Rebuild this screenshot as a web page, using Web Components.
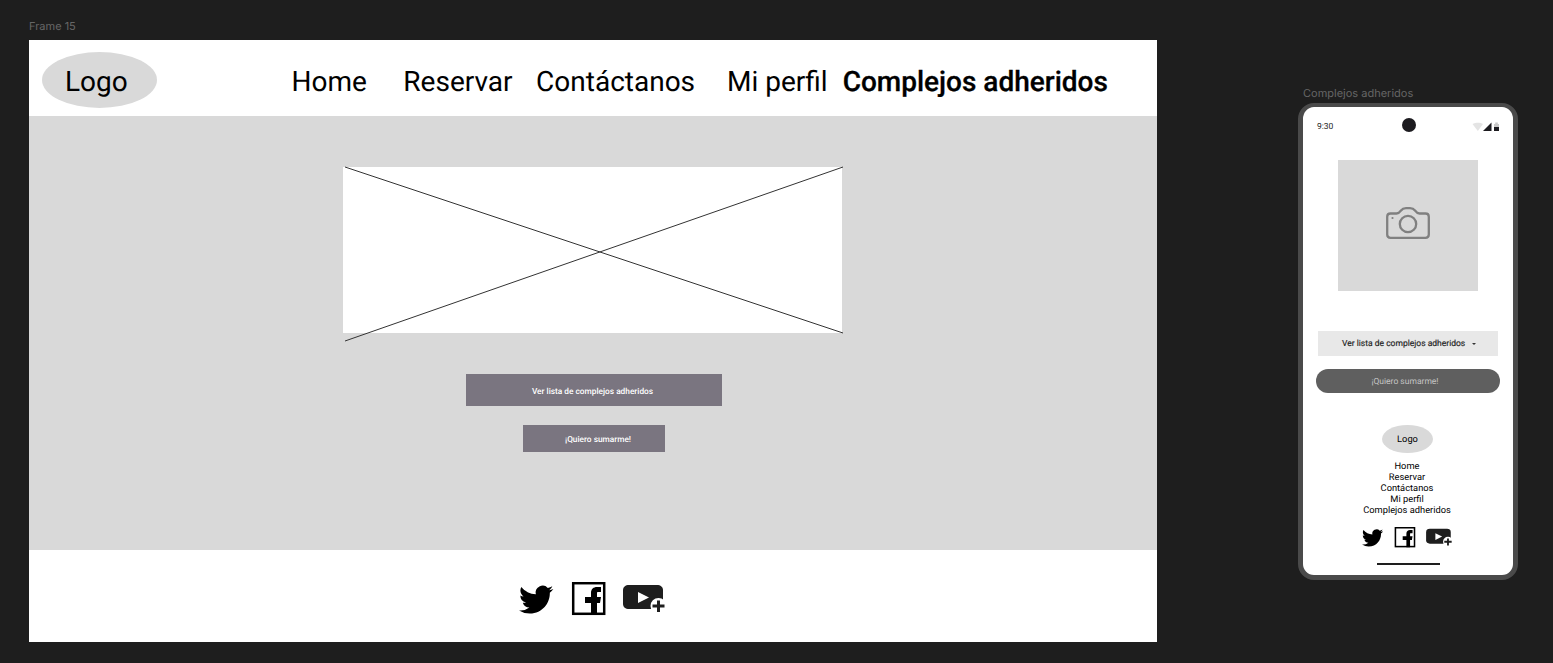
<!DOCTYPE html>
<html lang="es">
<head>
<meta charset="utf-8">
<title>Complejos adheridos</title>
<style>
  html, body { margin: 0; height: 100%; }
  body { background: #1e1e1e; overflow: hidden; font-family: Roboto, "Liberation Sans", sans-serif; text-rendering: geometricPrecision; }
</style>
</head>
<body>
<design-canvas>
  <canvas-frame label="Frame 15" style="left:29px;top:40px" >
    <desktop-page></desktop-page>
  </canvas-frame>
  <canvas-frame label="Complejos adheridos" style="left:1298px;top:103px" label-offset="5" label-top="-17">
    <phone-page></phone-page>
  </canvas-frame>
</design-canvas>

<script>
class DesignCanvas extends HTMLElement {
  constructor() {
    super();
    this.attachShadow({ mode: 'open' });
    this.shadowRoot.innerHTML = `
<style>
  :host { display: block; position: relative; width: 1553px; height: 663px; overflow: hidden; }
</style>
<slot></slot>
    `;
  }
}

class CanvasFrame extends HTMLElement {
  constructor() {
    super();
    this.attachShadow({ mode: 'open' });
  }

  connectedCallback() {
    const offset = this.getAttribute('label-offset') || 0;
    const top = this.getAttribute('label-top') || -21;
    this.shadowRoot.innerHTML = `
<style>
  :host { display: block; position: absolute; }
  .label {
    position: absolute;
    left: ${offset}px;
    top: ${top}px;
    font: 11px/14px Inter, "Liberation Sans", sans-serif;
    color: #666;
    white-space: nowrap;
  }
</style>
<div class="label">${this.getAttribute('label')}</div>
<slot></slot>
    `;
  }
}

class SocialIcons extends HTMLElement {
  constructor() {
    super();
    this.attachShadow({ mode: 'open' });
  }

  connectedCallback() {
    const width = this.getAttribute('width') || 146;
    this.shadowRoot.innerHTML = `
<style>
  :host { display: block; line-height: 0; }
</style>
<svg width="${width}" viewBox="0 0 146 34" fill="none">
  <path transform="translate(0 0.5) scale(1.43)" fill="#000" d="M23.953 4.57a10 10 0 01-2.825.775 4.958 4.958 0 002.163-2.723c-.951.555-2.005.959-3.127 1.184a4.92 4.92 0 00-8.384 4.482C7.69 8.095 4.067 6.13 1.64 3.162a4.822 4.822 0 00-.666 2.475c0 1.71.87 3.213 2.188 4.096a4.904 4.904 0 01-2.228-.616v.06a4.923 4.923 0 003.946 4.827 4.996 4.996 0 01-2.212.085 4.936 4.936 0 004.604 3.417 9.867 9.867 0 01-6.102 2.105c-.39 0-.779-.023-1.17-.067a13.995 13.995 0 007.557 2.209c9.053 0 13.998-7.496 13.998-13.985 0-.21 0-.42-.015-.63A9.935 9.935 0 0024 4.59z"/>
  <rect x="54.200" y="1.200" width="31" height="30.600" stroke="#000" stroke-width="2.500"/>
  <path fill="#000" d="M72 33V21h-6v-6h6v-4c0-4 2.500-6 6-6h4v5h-3c-1 0-1 .5-1 1.500V15h4l-1 6h-3v12z"/>
  <path fill="#1e1e1e" d="M110 3h28c3.500 0 6 2 6 5v14c0 3-2.500 5-6 5h-28c-3.500 0-6-2-6-5V8c0-3 2.500-5 6-5z"/>
  <path fill="#fff" d="M119 10l11 5.500-11 5.500z"/>
  <circle cx="139.500" cy="24" r="8" fill="#fff"/>
  <path fill="#1e1e1e" d="M138 18.500h3V22.500h4.500v3H141v4.500h-3v-4.500h-4.500v-3h4.500z"/>
</svg>
    `;
  }
}

class DesktopHeader extends HTMLElement {
  constructor() {
    super();
    this.attachShadow({ mode: 'open' });
    this.shadowRoot.innerHTML = `
<style>
  :host {
    display: flex;
    align-items: center;
    height: 76px;
    background: #fff;
    color: #000;
    font: 28px/34px Roboto, sans-serif;
    white-space: nowrap;
  }
  .logo {
    display: flex;
    align-items: center;
    box-sizing: border-box;
    width: 115px;
    height: 56px;
    margin: 4px 0 0 13px;
    padding: 4px 0 0 23px;
    border-radius: 50%;
    background: #d9d9d9;
  }
  a { color: inherit; text-decoration: none; padding-top: 8px; }
  a.home { margin-left: 134.500px; }
  a.reservar { margin-left: 36.500px; }
  a.contact { margin-left: 23.500px; }
  a.perfil { margin-left: 32px; }
  a.current { margin-left: 15px; font-weight: 500; -webkit-text-stroke: .3px #000; }
</style>
<div class="logo">Logo</div>
<a class="home">Home</a>
<a class="reservar">Reservar</a>
<a class="contact">Contáctanos</a>
<a class="perfil">Mi perfil</a>
<a class="current">Complejos adheridos</a>
    `;
  }
}

class DesktopPage extends HTMLElement {
  constructor() {
    super();
    this.attachShadow({ mode: 'open' });
    this.shadowRoot.innerHTML = `
<style>
  :host { display: block; width: 1128px; height: 602px; background: #fff; }
  main { height: 434px; box-sizing: border-box; padding: 51px 0 0 314px; background: #d9d9d9; }
  .image { position: relative; width: 499px; height: 166px; background: #fff; }
  .image svg { position: absolute; left: 0; top: 0; overflow: visible; }
  .btn {
    display: flex;
    align-items: center;
    justify-content: center;
    box-sizing: border-box;
    background: #7a7580;
    color: #fff;
    font: 500 8.300px/10px Roboto, sans-serif;
    padding-top: 3px;
  }
  .list { width: 256px; height: 32px; margin: 41px 0 0 123px; padding-right: 3px; }
  .join { width: 142px; height: 27px; margin: 19px 0 0 180px; padding-left: 8px; }
  footer { display: flex; justify-content: center; padding: 32px 2px 0 0; }
</style>
<desktop-header></desktop-header>
<main>
  <div class="image">
    <svg width="499" height="166">
      <path d="M2 0L500 166M2 174L500 0" stroke="#333" stroke-width="1" fill="none"/>
    </svg>
  </div>
  <div class="btn list">Ver lista de complejos adheridos</div>
  <div class="btn join">¡Quiero sumarme!</div>
</main>
<footer><social-icons></social-icons></footer>
    `;
  }
}

class PhoneStatus extends HTMLElement {
  constructor() {
    super();
    this.attachShadow({ mode: 'open' });
    this.shadowRoot.innerHTML = `
<style>
  :host {
    display: flex;
    align-items: center;
    justify-content: space-between;
    height: 34px;
    padding: 0 12px 0 14px;
    font: 8.500px/10px Roboto, sans-serif;
    color: #1e1e1e;
  }
  .time { width: 72px; padding-top: 5px; }
  .cam { width: 14px; height: 14px; border-radius: 50%; background: #1c1b1f; margin-top: 2px; }
  svg { margin: 6px 0 0 0; }
</style>
<span class="time">9:30</span>
<span class="cam"></span>
<svg width="72" height="10" viewBox="0 0 72 10">
  <path d="M43.500 2c3.200-1.800 7.800-1.800 10.500 0L48.800 9z" fill="#e4e4e4"/>
  <path d="M62.500 0.500v8.500h-8.500z" fill="#1c1b1f"/>
  <path d="M65 2h1.200v-1.500h2.600V2H70v7h-5z" fill="#c8c8c8"/>
  <path d="M65 5h5v4h-5z" fill="#1c1b1f"/>
</svg>
    `;
  }
}

class PhonePage extends HTMLElement {
  constructor() {
    super();
    this.attachShadow({ mode: 'open' });
    this.shadowRoot.innerHTML = `
<style>
  :host {
    display: flex;
    flex-direction: column;
    width: 210px;
    height: 468px;
    background: #fff;
    border: 5px solid #4a4a4a;
    border-top-width: 4px;
    border-radius: 16px;
    color: #000;
    font-family: Roboto, sans-serif;
    overflow: hidden;
  }
  .photo {
    display: flex;
    justify-content: center;
    box-sizing: border-box;
    width: 140px;
    height: 131px;
    margin: 19px 0 0 35px;
    padding-top: 47px;
    background: #d9d9d9;
  }
  .photo svg { display: block; }
  .select {
    display: flex;
    align-items: center;
    gap: 7px;
    box-sizing: border-box;
    width: 180px;
    height: 25px;
    margin: 40px 0 0 15px;
    padding-left: 24px;
    background: #e8e8e8;
    color: #1e1e1e;
    font: 8.500px/10px Roboto, sans-serif;
    -webkit-text-stroke: .15px #1e1e1e;
  }
  .select i { width: 0; height: 0; border: 2px solid transparent; border-top: 2.500px solid #333; border-bottom: 0; }
  .pill {
    display: flex;
    align-items: center;
    justify-content: center;
    box-sizing: border-box;
    width: 184px;
    height: 24px;
    margin: 13px 0 0 13px;
    padding: 1px 6px 0 0;
    border-radius: 12px;
    background: #5f5f5f;
    color: #c4c4c4;
    font: 8.500px/10px Roboto, sans-serif;
  }
  .logo {
    display: flex;
    align-items: center;
    justify-content: center;
    width: 51px;
    height: 28px;
    margin: 32px 0 0 79px;
    border-radius: 50%;
    background: #d9d9d9;
    font-size: 9.300px;
  }
  nav {
    display: flex;
    flex-direction: column;
    align-items: center;
    width: 208px;
    margin-top: 8px;
    font-size: 9.300px;
    line-height: 11px;
  }
  social-icons { margin: 11px 0 0 59px; }
  .bar { width: 63px; height: 2px; margin: 15px 0 0 74px; background: #1e1e1e; }
</style>
<phone-status></phone-status>
<div class="photo">
  <svg width="44" height="32" viewBox="0 0 44 32" fill="none" stroke="#808080" stroke-width="2.300" stroke-linejoin="round">
    <path d="M4.500 6.500h6c2 0 3-1 4.500-3s3-2.300 5-2.300h4c2 0 3.500.3 5 2.300s2.500 3 4.500 3h6c2 0 3.300 1.300 3.300 3.300V27.500c0 2-1.300 3.300-3.300 3.300H4.500c-2 0-3.300-1.300-3.300-3.300V9.800c0-2 1.300-3.300 3.300-3.300z"/>
    <circle cx="22" cy="17" r="8.200"/>
    <circle cx="6.500" cy="11" r="1.100" fill="#808080" stroke="none"/>
  </svg>
</div>
<div class="select"><span>Ver lista de complejos adheridos</span><i></i></div>
<div class="pill">¡Quiero sumarme!</div>
<div class="logo">Logo</div>
<nav>
  <span>Home</span>
  <span>Reservar</span>
  <span>Contáctanos</span>
  <span>Mi perfil</span>
  <span>Complejos adheridos</span>
</nav>
<social-icons width="90"></social-icons>
<div class="bar"></div>
    `;
  }
}

customElements.define('design-canvas', DesignCanvas);
customElements.define('canvas-frame', CanvasFrame);
customElements.define('social-icons', SocialIcons);
customElements.define('desktop-header', DesktopHeader);
customElements.define('desktop-page', DesktopPage);
customElements.define('phone-status', PhoneStatus);
customElements.define('phone-page', PhonePage);
</script>
</body>
</html>
